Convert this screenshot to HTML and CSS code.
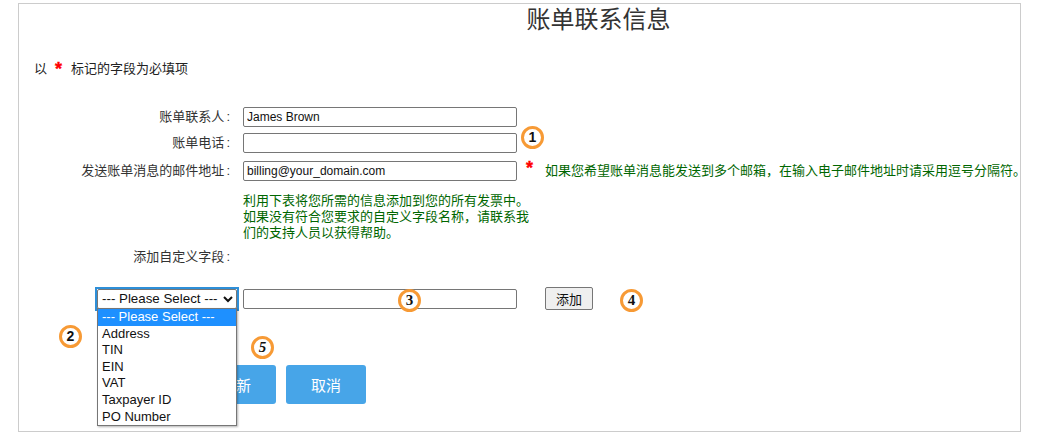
FILE: index.html
```html
<!DOCTYPE html>
<html lang="zh">
<head>
<meta charset="utf-8">
<title>账单联系信息</title>
<link rel="stylesheet" href="styles.css">
</head>
<body>
<main class="panel">
  <h1 class="title">账单联系信息</h1>
  <p class="required-note">以<span class="star star-note">*</span>标记的字段为必填项</p>
  <form class="form">
    <label class="label row-a">账单联系人<span class="colon">:</span></label>
    <input class="field row-a" type="text" value="James Brown">
    <label class="label row-b">账单电话<span class="colon">:</span></label>
    <input class="field row-b" type="text">
    <label class="label row-c">发送账单消息的邮件地址<span class="colon">:</span></label>
    <div class="field-with-hint row-c">
      <input class="field" type="text" value="billing@your_domain.com">
      <span class="star star-side">*</span>
      <span class="hint">如果您希望账单消息能发送到多个邮箱，在输入电子邮件地址时请采用逗号分隔符。</span>
    </div>
    <p class="help">利用下表将您所需的信息添加到您的所有发票中。如果没有符合您要求的自定义字段名称，请联系我们的支持人员以获得帮助。</p>
    <label class="label custom-label">添加自定义字段<span class="colon">:</span></label>
    <div class="custom-row">
      <div class="select-box">
        <select class="select"><option>--- Please Select ---</option></select>
      </div>
      <input class="field" type="text">
      <button class="add-btn" type="button">添加</button>
    </div>
    <div class="actions">
      <button class="action-btn" type="button">更新</button>
      <button class="action-btn" type="button">取消</button>
    </div>
  </form>
  <ul class="dropdown">
    <li class="dropdown-item selected">--- Please Select ---</li>
    <li class="dropdown-item">Address</li>
    <li class="dropdown-item">TIN</li>
    <li class="dropdown-item">EIN</li>
    <li class="dropdown-item">VAT</li>
    <li class="dropdown-item">Taxpayer ID</li>
    <li class="dropdown-item">PO Number</li>
  </ul>
  <span class="callout c1">1</span>
  <span class="callout c2">2</span>
  <span class="callout c3">3</span>
  <span class="callout c4">4</span>
  <span class="callout c5">5</span>
</main>
</body>
</html>
```
FILE: styles.css
```css
* { box-sizing: border-box; }
html, body { margin: 0; background: #fff; }
body {
  padding: 3px 19px 0 18px;
  font: 13px/16px "Liberation Sans", "Noto Sans CJK SC", sans-serif;
  color: #333;
  overflow: hidden;
}
.panel {
  position: relative;
  width: 1003px;
  height: 429px;
  border: 1px solid #ccc;
}
.title {
  margin: 0;
  padding: 3px 0 0 158px;
  text-align: center;
  font-size: 24px;
  line-height: 26px;
  font-weight: 400;
  color: #333;
}
.required-note {
  margin: 26px 0 0 15px;
  line-height: 16px;
  color: #222;
}
.star {
  margin: 0 9px 0 8px;
  color: #f00;
  font-weight: 700;
  font-size: 18px;
  line-height: 16px;
  -webkit-text-stroke: 0.4px #f00;
}
.star-note { position: relative; top: 2px; }
.colon {
  padding: 0 1px 0 2px;
}
.form {
  display: grid;
  grid-template-columns: 212px 1fr;
  column-gap: 12px;
  margin-top: 30px;
}
.label {
  grid-column: 1;
  text-align: right;
  color: #333;
  align-self: center;
}
.field {
  width: 274px;
  height: 20px;
  padding: 0 3px;
  border: 1px solid #767676;
  border-radius: 2px;
  font: 12px "Liberation Sans", sans-serif;
  color: #111;
  background: #fff;
}
.row-a { grid-row: 1; }
.row-b { grid-row: 2; margin-top: 6px; }
.row-c { grid-row: 3; margin-top: 8px; }
.field.row-a, .field.row-b, .field-with-hint { grid-column: 2; }
.label.row-b { align-self: end; padding-bottom: 2px; }
.label.row-c { align-self: end; padding-bottom: 2px; }
.field-with-hint {
  display: flex;
  align-items: center;
  width: 790px;
}
.star-side { margin: 0 0 0 9px; position: relative; top: -3px; }
.hint {
  margin-left: 12px;
  color: #060;
  white-space: nowrap;
}
.help {
  grid-column: 2;
  width: 290px;
  margin: 12px 0 0;
  color: #060;
}
.custom-label {
  margin-top: 8px;
}
.custom-row {
  grid-column: 1 / -1;
  display: flex;
  align-items: center;
  margin: 22px 0 0 78px;
}
.select-box {
  width: 140px;
  height: 20px;
  margin-right: 6px;
  outline: 2px solid #2e8fd8;
  outline-offset: 0;
}
.select {
  display: block;
  width: 100%;
  height: 100%;
  padding: 0;
  border: 1px solid #767676;
  border-radius: 2px;
  background-color: #fff;
  font: 13.33px "Liberation Sans", sans-serif;
  color: #111;
}
.add-btn {
  width: 48px;
  height: 23px;
  margin-left: 28px;
  padding: 0;
  border: 1px solid #767676;
  border-radius: 2px;
  background: #efefef;
  font: 13px "Liberation Sans", "Noto Sans CJK SC", sans-serif;
  color: #111;
}
.actions {
  grid-column: 1 / -1;
  display: flex;
  gap: 10px;
  margin: 55px 0 0 177px;
}
.action-btn {
  width: 80px;
  height: 39px;
  padding: 0;
  border: 0;
  border-radius: 3px;
  background: #47a5e8;
  color: #fff;
  font: 15px "Liberation Sans", "Noto Sans CJK SC", sans-serif;
}
.dropdown {
  position: absolute;
  left: 78px;
  top: 304px;
  width: 140px;
  margin: 0;
  padding: 0;
  list-style: none;
  background: #fff;
  border: 1px solid #767676;
  box-shadow: 1px 1px 2px rgba(0,0,0,.3);
  font: 13px/16.6px "Liberation Sans", sans-serif;
  color: #111;
}
.dropdown-item { padding: 0 4px; white-space: nowrap; }
.dropdown-item.selected { background: #1e90ff; color: #fff; }
.callout {
  position: absolute;
  width: 23px;
  height: 23px;
  border: 3px solid #f79a35;
  border-radius: 50%;
  background: #fff;
  color: #111;
  font: 700 14px/17px "Liberation Sans", sans-serif;
  text-align: center;
}
.c1 { left: 502px; top: 122px; }
.c2 { left: 40px; top: 321px; }
.c3 { left: 379px; top: 285px; font-family: "Liberation Serif", serif; font-size: 15px; }
.c4 { left: 601px; top: 285px; font-family: "Liberation Serif", serif; font-size: 15px; }
.c5 { left: 232px; top: 332px; font-family: "Liberation Serif", serif; font-style: italic; font-size: 15px; }
```
